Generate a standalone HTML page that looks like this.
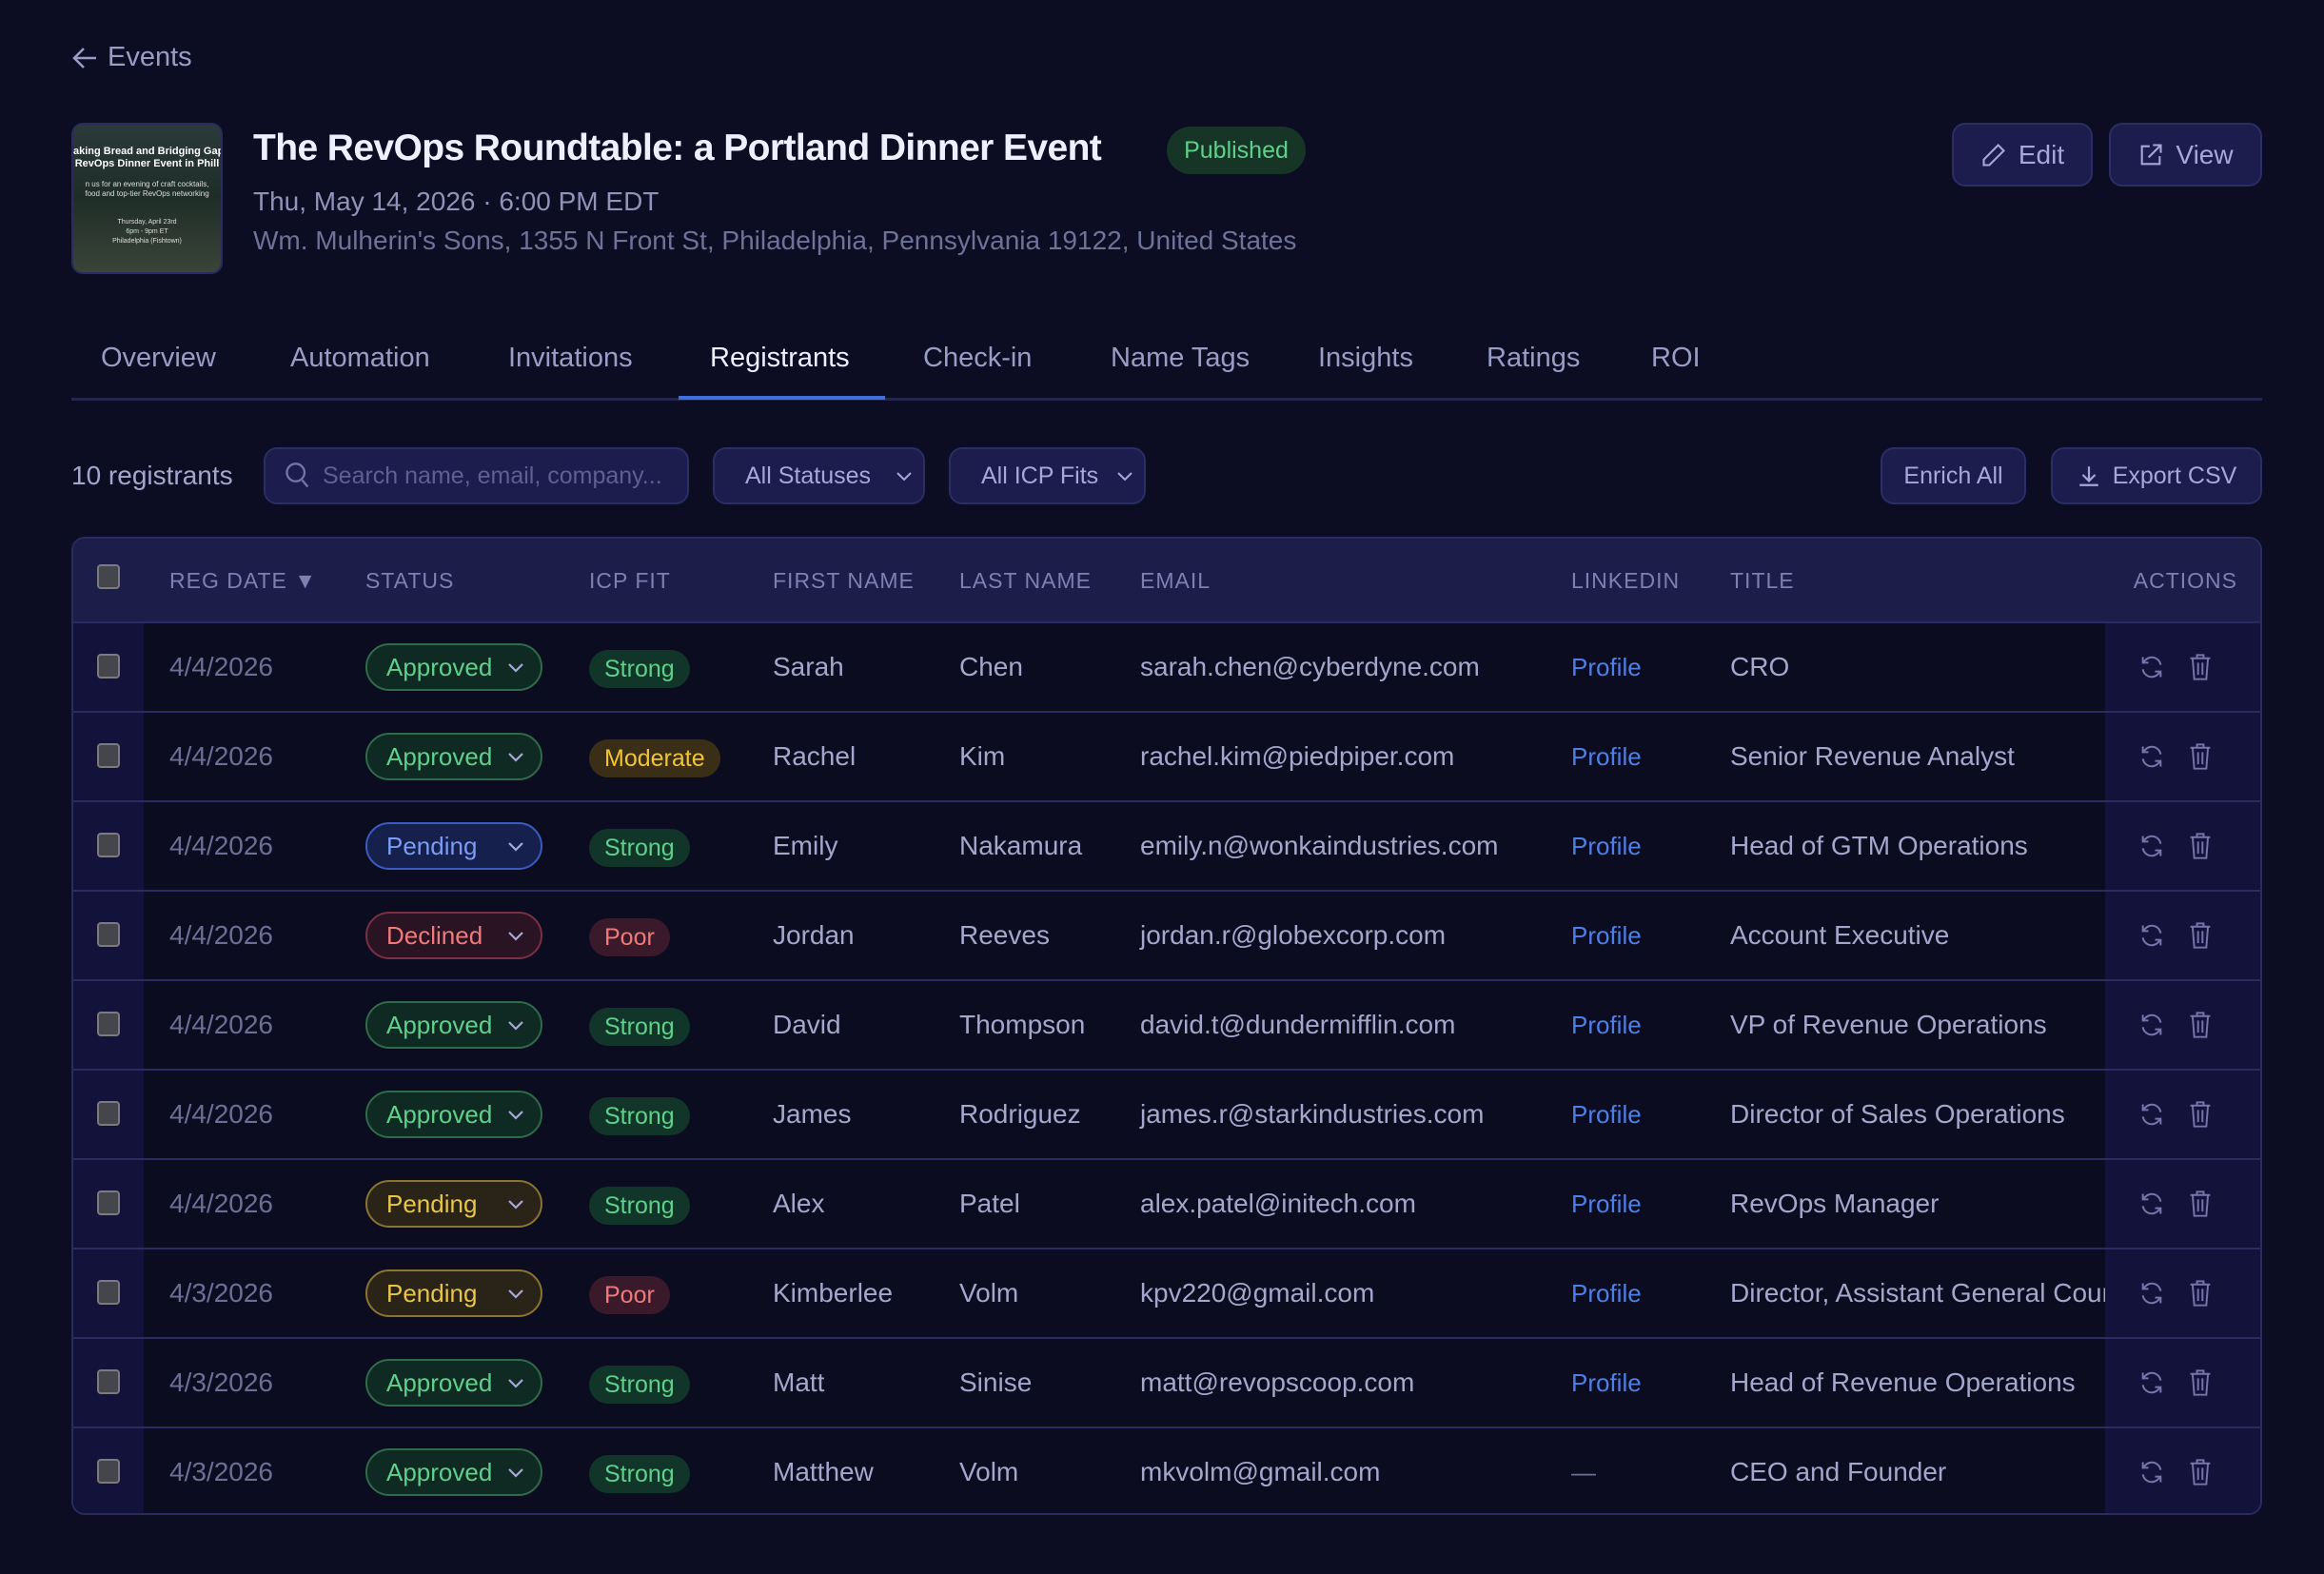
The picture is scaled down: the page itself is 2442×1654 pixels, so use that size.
<!DOCTYPE html>
<html><head><meta charset="utf-8"><style>
*{box-sizing:border-box;margin:0;padding:0}
body{width:2442px;height:1654px;background:#0c0d23;font-family:"Liberation Sans",sans-serif;color:#c9cbe6;position:relative;overflow:hidden}
.a{position:absolute;white-space:nowrap}
.btn{position:absolute;background:#1c1d4d;border:2px solid #2b2d66;border-radius:14px;color:#a6a8dc;font-size:28px;display:flex;align-items:center;justify-content:center;gap:12px}
.tab{position:absolute;top:360px;font-size:29px;color:#9a9cc6}
.tbl{position:absolute;left:75px;top:564px;width:2302px;height:1028px;border:2px solid #2a2b5e;border-radius:14px;overflow:hidden;background:#0b0c20}
.hd{position:absolute;left:0;top:0;width:100%;height:89px;background:#1d1d4a}
.hd span{position:absolute;top:31px;font-size:23px;color:#7e80b2;letter-spacing:1px}
.row{position:absolute;left:0;width:100%;height:94px;border-top:2px solid #2a2b5e}
.row .c{position:absolute;top:0;height:100%;display:flex;align-items:center;font-size:28px;white-space:nowrap}
.cb{position:absolute;width:24px;height:26px;border:2px solid #7a7a80;background:#45454c;border-radius:4px}
.pill{position:absolute;top:21px;left:307px;width:186px;height:50px;border-radius:25px;border:2px solid;font-size:26px;display:flex;align-items:center;padding-left:20px}
.pill svg{position:absolute;right:16px;top:16px}
.fit{position:absolute;top:28px;left:542px;height:40px;border-radius:20px;font-size:25px;display:flex;align-items:center;padding:0 16px}
</style></head><body>
<svg class="a" style="left:75px;top:48px" width="28" height="26" viewBox="0 0 28 26"><path d="M26 13H3M13 3L3 13l10 10" stroke="#9a9cc6" stroke-width="2.5" fill="none"/></svg>
<div class="a" style="left:113px;top:44px;font-size:29px;color:#9a9cc6">Events</div>
<div class="a" style="left:75px;top:129px;width:159px;height:159px;border-radius:12px;background:linear-gradient(#2b3a3a,#1f2d28 50%,#3a4438);overflow:hidden;border:2px solid #2a2b5e">
<div style="font-size:11px;color:#fff;text-align:center;margin-top:22px;line-height:13px;font-weight:bold">aking Bread and Bridging Gap<br>RevOps Dinner Event in Phill</div>
<div style="font-size:8px;color:#ddd;text-align:center;margin-top:10px;line-height:10px">n us for an evening of craft cocktails,<br>food and top-tier RevOps networking</div>
<div style="font-size:7px;color:#ddd;text-align:center;margin-top:20px;line-height:10px">Thursday, April 23rd<br>6pm - 9pm ET<br>Philadelphia (Fishtown)</div></div>
<div class="a" style="left:266px;top:134px;font-size:39px;font-weight:bold;color:#eef0ff;letter-spacing:-0.6px">The RevOps Roundtable: a Portland Dinner Event</div>
<div class="a" style="left:1226px;top:133px;width:146px;height:50px;border-radius:25px;background:#163527;color:#5fd08a;font-size:25px;display:flex;align-items:center;justify-content:center">Published</div>
<div class="a" style="left:266px;top:196px;font-size:28px;color:#9092b8">Thu, May 14, 2026 · 6:00 PM EDT</div>
<div class="a" style="left:266px;top:237px;font-size:28px;color:#6f7199">Wm. Mulherin's Sons, 1355 N Front St, Philadelphia, Pennsylvania 19122, United States</div>
<div class="btn" style="left:2051px;top:129px;width:148px;height:67px"><svg width="28" height="28" viewBox="0 0 24 24"><path d="M16 3l5 5L8 21H3v-5z" stroke="#a6a8dc" stroke-width="1.8" fill="none"/></svg>Edit</div>
<div class="btn" style="left:2216px;top:129px;width:161px;height:67px"><svg width="28" height="28" viewBox="0 0 24 24"><path d="M11 4H4v16h16v-7M14 3h7v7M21 3L10 14" stroke="#a6a8dc" stroke-width="1.8" fill="none"/></svg>View</div>
<div class="tab" style="left:106px">Overview</div>
<div class="tab" style="left:305px">Automation</div>
<div class="tab" style="left:534px">Invitations</div>
<div class="tab" style="left:746px;color:#eef0ff">Registrants</div>
<div class="tab" style="left:970px">Check-in</div>
<div class="tab" style="left:1167px">Name Tags</div>
<div class="tab" style="left:1385px">Insights</div>
<div class="tab" style="left:1562px">Ratings</div>
<div class="tab" style="left:1735px">ROI</div>
<div class="a" style="left:75px;top:418px;width:2302px;height:3px;background:#24254f"></div>
<div class="a" style="left:713px;top:416px;width:217px;height:4px;background:#3d6fe0"></div>
<div class="a" style="left:75px;top:484px;font-size:28px;color:#a4a6cc">10 registrants</div>
<div class="btn" style="left:277px;top:470px;width:447px;height:60px;justify-content:flex-start;padding-left:20px;color:#5e6094;font-size:25px"><svg width="28" height="30" viewBox="0 0 24 26"><circle cx="10" cy="10" r="8" stroke="#7476aa" stroke-width="2" fill="none"/><path d="M16 17l5 6" stroke="#7476aa" stroke-width="2"/></svg>Search name, email, company...</div>
<div class="btn" style="left:749px;top:470px;width:223px;height:60px;font-size:25px;justify-content:flex-start;padding-left:32px">All Statuses<svg style="position:absolute;right:10px" width="20" height="14" viewBox="0 0 20 14"><path d="M3 4l7 7 7-7" stroke="#a6a8dc" stroke-width="2" fill="none"/></svg></div>
<div class="btn" style="left:997px;top:470px;width:207px;height:60px;font-size:25px;justify-content:flex-start;padding-left:32px">All ICP Fits<svg style="position:absolute;right:10px" width="20" height="14" viewBox="0 0 20 14"><path d="M3 4l7 7 7-7" stroke="#a6a8dc" stroke-width="2" fill="none"/></svg></div>
<div class="btn" style="left:1976px;top:470px;width:153px;height:60px;font-size:25px">Enrich All</div>
<div class="btn" style="left:2155px;top:470px;width:222px;height:60px;font-size:25px"><svg width="26" height="26" viewBox="0 0 24 24"><path d="M12 3v13M6 11l6 6 6-6M3 21h18" stroke="#a6a8dc" stroke-width="2" fill="none"/></svg>Export CSV</div>
<div class="tbl">
<div class="a" style="left:0;top:0;width:74px;height:100%;background:#12123a"></div>
<div class="a" style="left:2135px;top:0;width:167px;height:100%;background:#12123a"></div>
<div class="hd"><div class="cb" style="left:25px;top:27px"></div>
<span style="left:101px">REG DATE ▼</span><span style="left:307px">STATUS</span><span style="left:542px">ICP FIT</span><span style="left:735px">FIRST NAME</span><span style="left:931px">LAST NAME</span><span style="left:1121px">EMAIL</span><span style="left:1574px">LINKEDIN</span><span style="left:1741px">TITLE</span><span style="right:24px">ACTIONS</span></div>
<div id="rows"></div>
</div>
<script>
var d=[["4/4/2026","A","S","Sarah","Chen","sarah.chen@cyberdyne.com",1,"CRO"],
["4/4/2026","A","M","Rachel","Kim","rachel.kim@piedpiper.com",1,"Senior Revenue Analyst"],
["4/4/2026","PB","S","Emily","Nakamura","emily.n@wonkaindustries.com",1,"Head of GTM Operations"],
["4/4/2026","D","P","Jordan","Reeves","jordan.r@globexcorp.com",1,"Account Executive"],
["4/4/2026","A","S","David","Thompson","david.t@dundermifflin.com",1,"VP of Revenue Operations"],
["4/4/2026","A","S","James","Rodriguez","james.r@starkindustries.com",1,"Director of Sales Operations"],
["4/4/2026","PY","S","Alex","Patel","alex.patel@initech.com",1,"RevOps Manager"],
["4/3/2026","PY","P","Kimberlee","Volm","kpv220@gmail.com",1,"Director, Assistant General Counsel"],
["4/3/2026","A","S","Matt","Sinise","matt@revopscoop.com",1,"Head of Revenue Operations"],
["4/3/2026","A","S","Matthew","Volm","mkvolm@gmail.com",0,"CEO and Founder"]];
var st={A:["Approved","#5fd08a","#2f6b48","#0f2a22"],PB:["Pending","#7b9bf5","#3b5bc0","#16204c"],PY:["Pending","#e8c547","#8a7430","#2a2418"],D:["Declined","#f07a7a","#7a3040","#2a1424"]};
var ft={S:["Strong","#5fd08a","#12352a"],M:["Moderate","#f0c531","#3a2e16"],P:["Poor","#f07a7a","#3a1a2a"]};
var h="";
d.forEach(function(r,i){var s=st[r[1]],f=ft[r[2]];
h+='<div class="row" style="top:'+(87+i*94)+'px"><div class="cb" style="left:25px;top:32px"></div>'+
'<div class="c" style="left:101px;color:#6c6e96">'+r[0]+'</div>'+
'<div class="pill" style="color:'+s[1]+';border-color:'+s[2]+';background:'+s[3]+'">'+s[0]+'<svg width="20" height="14" viewBox="0 0 20 14"><path d="M3 4l7 7 7-7" stroke="#a6a8dc" stroke-width="2.2" fill="none"/></svg></div>'+
'<div class="fit" style="color:'+f[1]+';background:'+f[2]+'">'+f[0]+'</div>'+
'<div class="c" style="left:735px;color:#a4a6cc">'+r[3]+'</div>'+
'<div class="c" style="left:931px;color:#a4a6cc">'+r[4]+'</div>'+
'<div class="c" style="left:1121px;color:#a4a6cc">'+r[5]+'</div>'+
'<div class="c" style="left:1574px;color:'+(r[6]?'#4d7fe8':'#6c6e96')+';font-size:26px">'+(r[6]?'Profile':'—')+'</div>'+
'<div class="c" style="left:1741px;width:394px;overflow:hidden;color:#a4a6cc">'+r[7]+'</div>'+
'<svg class="a" style="left:2170px;top:32px" width="28" height="28" viewBox="0 0 24 24"><path d="M20 10a8 8 0 0 0-14-4l-2 2M4 14a8 8 0 0 0 14 4l2-2M4 3v5h5M20 21v-5h-5" stroke="#7476aa" stroke-width="1.7" fill="none"/></svg>'+
'<svg class="a" style="left:2222px;top:31px" width="26" height="30" viewBox="0 0 22 26"><path d="M2 5h18M8 5V2h6v3M4 5l1.5 19h11L18 5M9 9v11M13 9v11" stroke="#7476aa" stroke-width="1.7" fill="none"/></svg></div>';});
document.getElementById("rows").innerHTML=h;
</script>
</body></html>
